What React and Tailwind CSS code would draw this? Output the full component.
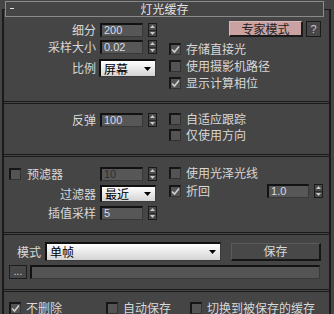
import React from "react";

const cjk = { fontFamily: '"Noto Sans CJK SC", "Noto Sans", sans-serif' };

// small up/down spinner used next to numeric fields
const Spinner = () => (
  <div className="w-[9px] h-[14px] flex flex-col bg-[#4a4a4a] border border-[#1a1a1a]">
    <div className="flex-1 flex items-center justify-center border-b border-[#2a2a2a]">
      <svg width="5" height="3" viewBox="0 0 5 3"><path d="M2.5 0 L5 3 L0 3 Z" fill="#c8c8c8" /></svg>
    </div>
    <div className="flex-1 flex items-center justify-center">
      <svg width="5" height="3" viewBox="0 0 5 3"><path d="M0 0 L5 0 L2.5 3 Z" fill="#c8c8c8" /></svg>
    </div>
  </div>
);

const NumField = ({ value, w = "w-[43px]", disabled }) => (
  <div
    className={`${w} h-[14px] flex items-center pl-[2px] bg-[#575757] border-t-2 border-l-2 border-r border-b border-t-[#121212] border-l-[#121212] border-r-[#383838] border-b-[#383838] text-[11px] leading-none ${disabled ? "text-[#2e2e2e]" : "text-[#d6dcea]"}`}
    style={{ fontFamily: '"Liberation Sans", Arial, sans-serif' }}
  >
    {value}
  </div>
);

const Check = ({ checked }) => (
  <div className="w-[12px] h-[12px] shrink-0 flex items-center justify-center bg-[#545454] border-t-2 border-l-2 border-r border-b border-t-[#161616] border-l-[#161616] border-r-[#333] border-b-[#333]">
    {checked && (
      <svg width="9" height="9" viewBox="0 0 9 9">
        <path d="M1 4.5 L3.5 7 L8 1.5" stroke="#d0d0d0" strokeWidth="1.6" fill="none" />
      </svg>
    )}
  </div>
);

const CheckRow = ({ checked, label, h = "h-[17px]", children }) => (
  <div className={`${h} flex items-center`}>
    <Check checked={checked} />
    <span className="ml-[5px] text-[12px] leading-none text-[#d8d8d8]">{label}</span>
    {children}
  </div>
);

const Dropdown = ({ value, w, h = "h-[18px]" }) => (
  <div className={`${w} ${h} flex items-center justify-between pl-[3px] pr-[4px] bg-gradient-to-b from-[#ffffff] to-[#d4d4d4] border-t-2 border-l-2 border-r border-b border-t-[#101010] border-l-[#101010] border-r-[#3a3a3a] border-b-[#3a3a3a]`}>
    <span className="text-[12px] leading-none text-black">{value}</span>
    <svg width="7" height="4" viewBox="0 0 7 4"><path d="M0 0 L7 0 L3.5 4 Z" fill="#000" /></svg>
  </div>
);

const Label = ({ children }) => (
  <div className="w-[92px] text-right text-[12px] leading-none text-[#d8d8d8]">{children}</div>
);

const Sep = () => <div className="h-[3px] border-t border-b border-[#1b1b1b]" />;

export default function App() {
  return (
    <div className="w-[334px] h-[314px] bg-[#454545] overflow-hidden pt-[1px]" style={cjk}>
      {/* rollout header */}
      <div className="relative z-10 ml-[5px] w-[319px] h-[16px] bg-[#454545] border border-[#8a8a8a] flex items-center">
        <span className="absolute left-[4px] top-[6px] w-[4px] h-[1px] bg-[#e0e0e0]" />
        <span className="w-full text-center text-[12px] leading-none text-[#e2e2e2]">灯光缓存</span>
      </div>

      <div className="-mt-[8px] ml-[2px] w-[329px] h-[320px] border-t border-l-2 border-r-2 border-[#1b1b1b]">
        {/* section 1 */}
        <div className="h-[91px] grid grid-cols-[165px_1fr]">
          <div className="pt-[13px]">
            <div className="h-[14px] flex items-center">
              <Label>细分</Label>
              <div className="ml-[4px]"><NumField value="200" /></div>
              <div className="ml-[5px]"><Spinner /></div>
            </div>
            <div className="mt-[3px] h-[14px] flex items-center">
              <Label>采样大小</Label>
              <div className="ml-[4px]"><NumField value="0.02" /></div>
              <div className="ml-[5px]"><Spinner /></div>
            </div>
            <div className="mt-[5px] h-[18px] flex items-center">
              <Label>比例</Label>
              <div className="ml-[3px]"><Dropdown value="屏幕" w="w-[57px]" /></div>
            </div>
          </div>
          <div className="pt-[11px]">
            <div className="h-[16px] flex items-center">
              <div className="ml-[60px] w-[74px] h-[16px] flex items-center justify-center bg-[#caa2a2] border-t border-l border-t-[#d8b8b8] border-l-[#d8b8b8] border-r-2 border-b-2 border-r-[#1a1a1a] border-b-[#1a1a1a] text-[12px] leading-none text-[#1e1e1e]">
                专家模式
              </div>
              <div className="ml-[3px] w-[15px] h-[16px] flex items-center justify-center bg-[#474747] border border-[#1a1a1a] text-[11px] leading-none text-[#c8c8d8]" style={{ fontFamily: '"Liberation Sans", Arial, sans-serif' }}>
                ?
              </div>
            </div>
            <div className="mt-[3px]">
              <CheckRow checked label="存储直接光" />
              <CheckRow label="使用摄影机路径" />
              <CheckRow checked label="显示计算相位" />
            </div>
          </div>
        </div>

        <Sep />

        {/* section 2 */}
        <div className="h-[50px] grid grid-cols-[165px_1fr]">
          <div className="pt-[9px]">
            <div className="h-[14px] flex items-center">
              <Label>反弹</Label>
              <div className="ml-[4px]"><NumField value="100" /></div>
              <div className="ml-[5px]"><Spinner /></div>
            </div>
          </div>
          <div className="pt-[7px]">
            <CheckRow label="自适应跟踪" h="h-[16px]" />
            <CheckRow label="仅使用方向" h="h-[16px]" />
          </div>
        </div>

        <Sep />

        {/* section 3 */}
        <div className="h-[75px] grid grid-cols-[165px_1fr]">
          <div className="pt-[10px]">
            <div className="h-[14px] flex items-center">
              <div className="w-[92px] flex items-center pl-[5px]">
                <Check />
                <span className="ml-[6px] text-[12px] leading-none text-[#d8d8d8]">预滤器</span>
              </div>
              <div className="ml-[4px]"><NumField value="10" disabled /></div>
              <div className="ml-[5px]"><Spinner /></div>
            </div>
            <div className="mt-[4px] h-[17px] flex items-center">
              <Label>过滤器</Label>
              <div className="ml-[4px]"><Dropdown value="最近" w="w-[56px]" h="h-[17px]" /></div>
            </div>
            <div className="mt-[4px] h-[14px] flex items-center">
              <Label>插值采样</Label>
              <div className="ml-[4px]"><NumField value="5" /></div>
              <div className="ml-[5px]"><Spinner /></div>
            </div>
          </div>
          <div className="pt-[8px]">
            <CheckRow label="使用光泽光线" h="h-[16px]" />
            <div className="mt-[2px]">
              <CheckRow checked label="折回" h="h-[16px]">
                <div className="ml-[57px]"><NumField value="1.0" w="w-[42px]" /></div>
                <div className="ml-[5px]"><Spinner /></div>
              </CheckRow>
            </div>
          </div>
        </div>

        <Sep />

        {/* section 4 */}
        <div className="h-[54px] pt-[7px]">
          <div className="h-[19px] flex items-center">
            <span className="ml-[13px] w-[26px] text-[12px] leading-none text-[#d8d8d8]">模式</span>
            <div className="ml-[2px]"><Dropdown value="单帧" w="w-[176px]" h="h-[19px]" /></div>
            <div className="ml-[10px] w-[90px] h-[18px] flex items-center justify-center bg-[#484848] border-t border-l border-t-[#5a5a5a] border-l-[#5a5a5a] border-r-2 border-b-2 border-r-[#161616] border-b-[#161616] text-[12px] leading-none text-[#d8d8d8]">
              保存
            </div>
          </div>
          <div className="mt-[4px] h-[14px] flex items-center">
            <div className="ml-[5px] w-[18px] h-[14px] flex items-end justify-center pb-[2px] bg-[#474747] border border-[#1c1c1c] text-[10px] leading-none text-[#d0d0d0]">
              ...
            </div>
            <div className="ml-[3px] w-[290px] h-[14px] bg-[#545454] border-t-2 border-l-2 border-r border-b border-t-[#121212] border-l-[#121212] border-r-[#383838] border-b-[#383838]" />
          </div>
        </div>

        <Sep />

        {/* section 5 */}
        <div className="pt-[8px] flex">
          <div className="ml-[5px] w-[97px]"><CheckRow checked label="不删除" h="h-[16px]" /></div>
          <div className="w-[84px]"><CheckRow label="自动保存" h="h-[16px]" /></div>
          <div><CheckRow label="切换到被保存的缓存" h="h-[16px]" /></div>
        </div>
      </div>
    </div>
  );
}
